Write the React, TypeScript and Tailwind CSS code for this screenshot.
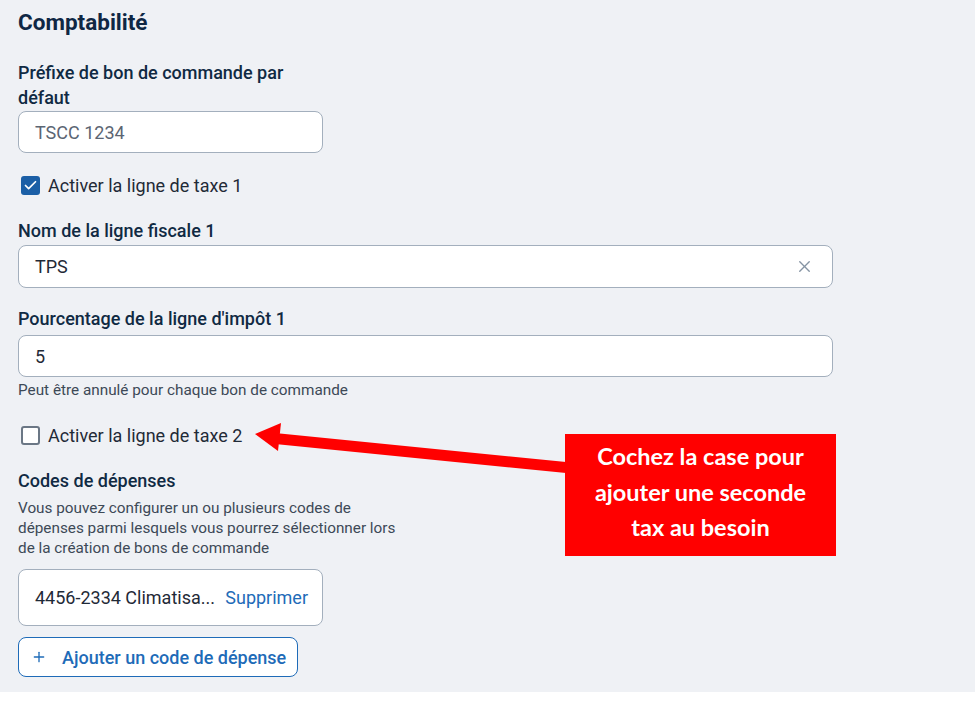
import { X, Plus, Check } from "lucide-react"

function Label({ children, className = "" }: { children: React.ReactNode; className?: string }) {
  return <div className={`text-[18px] font-medium leading-[24px] text-[#102a43] ${className}`}>{children}</div>
}

function CheckRow({ checked, label, className = "" }: { checked?: boolean; label: string; className?: string }) {
  return (
    <div className={`flex h-[24px] items-center gap-[8px] pl-[3px] ${className}`}>
      {checked ? (
        <span className="flex h-[19px] w-[19px] items-center justify-center rounded-[3px] bg-[#1b5fa6]">
          <Check className="h-[15px] w-[15px] text-white" strokeWidth={2.75} />
        </span>
      ) : (
        <span className="h-[19px] w-[19px] rounded-[3px] border-2 border-[#6b7785] bg-white" />
      )}
      <span className="text-[18px] text-[#1f2a37]">{label}</span>
    </div>
  )
}

export default function App() {
  return (
    <div className="relative min-h-[715px] bg-white font-['Roboto',sans-serif]">
      <div className="bg-[#eff1f5] pb-[15px] pl-[18px] pt-[6px]">
        <h2 className="text-[22.5px] font-bold leading-[32px] text-[#0f2744]">Comptabilité</h2>

        <Label className="mt-[22px] w-[305px] leading-[25px]">Préfixe de bon de commande par défaut</Label>
        <div className="mt-[1px] flex h-[42px] w-[305px] items-center rounded-[8px] border border-[#a3afbd] bg-white px-[16px] text-[18px] text-[#5b6573]">
          TSCC 1234
        </div>

        <CheckRow checked label="Activer la ligne de taxe 1" className="mt-[20px]" />

        <Label className="mt-[22px]">Nom de la ligne fiscale 1</Label>
        <div className="mt-[2px] flex h-[43px] w-[815px] items-center justify-between rounded-[8px] border border-[#a3afbd] bg-white pl-[16px] pr-[18px] text-[18px] text-[#1f2a37]">
          <span>TPS</span>
          <X className="h-[19px] w-[19px] text-[#8593a3]" strokeWidth={1.75} />
        </div>

        <Label className="mt-[19px]">Pourcentage de la ligne d'impôt 1</Label>
        <div className="mt-[4px] flex h-[42px] w-[815px] items-center rounded-[8px] border border-[#a3afbd] bg-white px-[16px] text-[18px] text-[#1f2a37]">
          5
        </div>
        <p className="mt-[3px] text-[15.3px] leading-[20px] text-[#3d4957]">Peut être annulé pour chaque bon de commande</p>

        <CheckRow label="Activer la ligne de taxe 2" className="mt-[23px]" />

        <Label className="mt-[22px]">Codes de dépenses</Label>
        <p className="mt-[5px] w-[390px] text-[15.3px] leading-[20px] text-[#3d4957]">
          Vous pouvez configurer un ou plusieurs codes de dépenses parmi lesquels vous pourrez sélectionner lors de la création de bons de commande
        </p>

        <div className="mt-[11px] flex h-[57px] w-[305px] items-center justify-between rounded-[8px] border border-[#a3afbd] bg-white pl-[16px] pr-[14px] text-[18px]">
          <span className="text-[#1f2a37]">4456-2334 Climatisa...</span>
          <span className="text-[#1e6bb8]">Supprimer</span>
        </div>

        <button className="mt-[11px] flex h-[40px] w-[280px] items-center gap-[15px] rounded-[8px] border-[1.5px] border-[#1e6bb8] bg-white pl-[12px] text-[18px] font-medium text-[#1e6bb8]">
          <Plus className="h-[16px] w-[16px]" strokeWidth={2} />
          Ajouter un code de dépense
        </button>
      </div>

      <svg className="pointer-events-none absolute left-0 top-0" width="975" height="715">
        <polygon points="275,433 566,462 566,473 275,444" fill="#ff0000" />
        <polygon points="255,434 281,423 278,451" fill="#ff0000" />
      </svg>

      <div className="absolute left-[565px] top-[434px] flex h-[122px] w-[271px] items-center justify-center bg-[#ff0000] pb-[5px] text-center font-['Lato',sans-serif] text-[23.5px] font-bold leading-[35.5px] text-white">
        Cochez la case pour
        <br />
        ajouter une seconde
        <br />
        tax au besoin
      </div>
    </div>
  )
}
